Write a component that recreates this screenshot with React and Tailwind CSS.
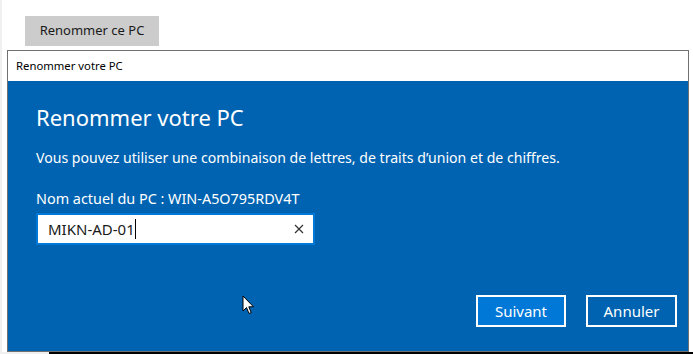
import React from "react";

const font = { fontFamily: '"Segoe UI", "Noto Sans", sans-serif' };

function Cursor() {
  return (
    <svg width="13" height="20" viewBox="0 0 13 20" className="absolute left-[242px] top-[295px]">
      <path d="M1 1 L1 16 L4.5 12.5 L7 18.5 L9.2 17.6 L6.8 11.8 L11.5 11.8 Z" fill="#fff" stroke="#000" strokeWidth="1" strokeLinejoin="miter" />
    </svg>
  );
}

export default function App() {
  return (
    <div className="relative w-[693px] h-[354px] overflow-hidden bg-white flex" style={font}>
      <div className="w-[2px] h-full bg-[#f0f0f0]" />
      <div className="flex-1 flex flex-col">
        <div className="pt-[16px] pl-[23px]">
          <div className="w-[134px] h-[30px] bg-[#cccccc] flex items-center justify-center text-[13px] text-[#1a1a1a]">
            Renommer ce PC
          </div>
        </div>
        <div className="ml-[5px] mt-[4px] w-[682px] border border-[#707070] flex flex-col">
          <div className="h-[30px] bg-white flex items-center pl-[8px] text-[11.3px] text-black">
            Renommer votre PC
          </div>
          <div className="h-[270px] bg-[#0063b1] text-white pl-[28px] pr-[10px] flex flex-col">
            <div className="mt-[22px] text-[22px] leading-[28px] font-normal">Renommer votre PC</div>
            <div className="mt-[17px] text-[14.1px] leading-[20px]">
              Vous pouvez utiliser une combinaison de lettres, de traits d’union et de chiffres.
            </div>
            <div className="mt-[21px] text-[14.4px] leading-[20px]">Nom actuel du PC : WIN-A5O795RDV4T</div>
            <div className="mt-[4px] w-[279px] h-[32px] border-2 border-[#0078d7] bg-white flex items-center pl-[10px] pr-[9px]">
              <span className="text-[15px] text-[#1a1a1a]">MIKN-AD-01</span>
              <span className="w-px h-[20px] bg-black" />
              <span className="ml-auto text-[#333]">
                <svg width="10" height="10" viewBox="0 0 10 10">
                  <path d="M1 1 L9 9 M9 1 L1 9" stroke="#333" strokeWidth="1.2" />
                </svg>
              </span>
            </div>
            <div className="mt-auto mb-[24px] flex justify-end gap-[20px] pr-[1px]">
              <div className="w-[90px] h-[32px] border-2 border-white bg-[#0078d7] flex items-center justify-center text-[15px]">
                Suivant
              </div>
              <div className="w-[91px] h-[32px] border-2 border-white flex items-center justify-center text-[15px]">
                Annuler
              </div>
            </div>
          </div>
        </div>
        <div className="flex">
          <div className="w-[47px] h-[3px] bg-[#f0f0f0]" />
          <div className="flex-1 h-[3px] bg-black" />
        </div>
      </div>
      <Cursor />
    </div>
  );
}
